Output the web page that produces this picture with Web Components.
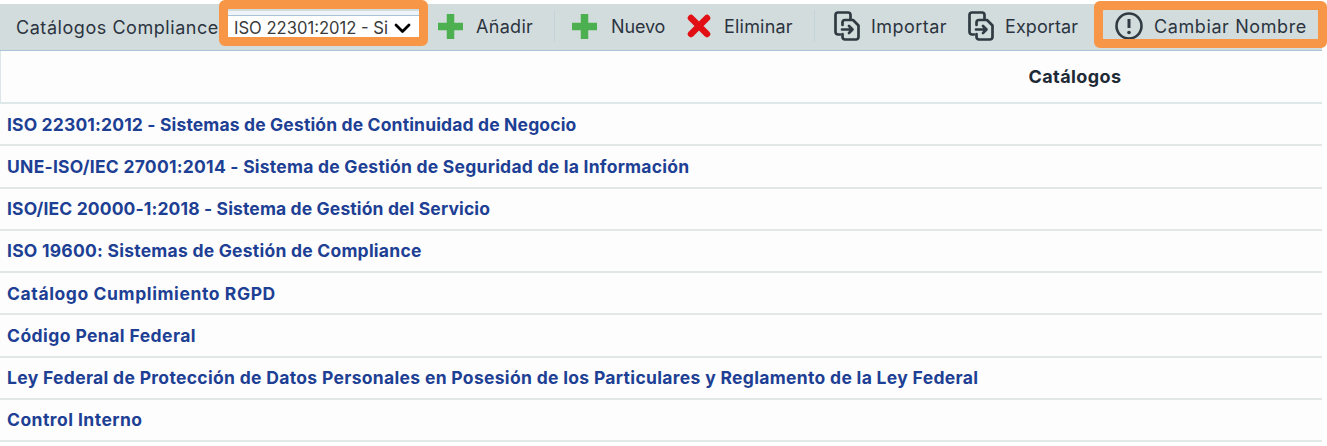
<!DOCTYPE html>
<html lang="es"><head><meta charset="utf-8"><title>Catálogos</title>
<style>
html,body{margin:0;padding:0;background:#fff;overflow:hidden}
body{width:1327px;height:446px;font-family:Inter,"Open Sans",sans-serif}
</style></head><body>
<cat-app>
<cat-toolbar>
  <span slot="label">Catálogos Compliance</span>
  <cat-select slot="select" value="ISO 22301:2012 - Si"></cat-select>
  <cat-btn slot="a" icon="plus" gap="13" w="116" style="--ls:.3px">Añadir</cat-btn>
  <cat-btn slot="b" icon="plus" gap="14" w="115" style="--ls:-.15px">Nuevo</cat-btn>
  <cat-btn slot="b" icon="x" gap="13" w="127" style="--ls:.2px">Eliminar</cat-btn>
  <cat-btn slot="c" icon="copy" gap="11" w="134" style="--ls:.45px">Importar</cat-btn>
  <cat-btn slot="c" icon="copy" gap="11" w="130" style="--ls:.08px">Exportar</cat-btn>
  <cat-btn slot="d" icon="info" gap="11" w="207" style="--ls:.6px">Cambiar Nombre</cat-btn>
</cat-toolbar>
<cat-table heading="Catálogos">
  <cat-row style="--ls:.15px">ISO 22301:2012 - Sistemas de Gestión de Continuidad de Negocio</cat-row>
  <cat-row style="--ls:.24px">UNE-ISO/IEC 27001:2014 - Sistema de Gestión de Seguridad de la Información</cat-row>
  <cat-row style="--ls:.13px">ISO/IEC 20000-1:2018 - Sistema de Gestión del Servicio</cat-row>
  <cat-row style="--ls:.24px">ISO 19600: Sistemas de Gestión de Compliance</cat-row>
  <cat-row style="--ls:.6px">Catálogo Cumplimiento RGPD</cat-row>
  <cat-row style="--ls:.43px">Código Penal Federal</cat-row>
  <cat-row style="--ls:.32px">Ley Federal de Protección de Datos Personales en Posesión de los Particulares y Reglamento de la Ley Federal</cat-row>
  <cat-row style="--ls:.46px">Control Interno</cat-row>
</cat-table>
</cat-app>
<script>
const ICONS={
plus:'<svg width="25" height="25" viewBox="0 0 25 25"><path d="M8.750 0h7.500v8.750H25v7.500h-8.750V25h-7.500v-8.750H0v-7.500h8.750z" fill="#4caf50"/></svg>',
x:'<svg width="24" height="24" viewBox="0 0 24 24"><path d="M4 4 20 20M20 4 4 20" stroke="#e10f14" stroke-width="6.500" stroke-linecap="round"/></svg>',
copy:'<svg width="26" height="30" viewBox="0 0 26 30" fill="none" stroke="#2f3a42" stroke-width="2.700" stroke-linejoin="round" stroke-linecap="round"><path d="M6 23.500H4A2.500 2.500 0 0 1 1.500 21V4A2.500 2.500 0 0 1 4 1.500h10A2.500 2.500 0 0 1 16.500 4v4.500"/><path d="M8.500 14v-2.500A2.500 2.500 0 0 1 11 9h8l5.500 5.500V26A2.500 2.500 0 0 1 22 28.500H11A2.500 2.500 0 0 1 8.500 26v-3"/><path d="M8 18.500h10.500M15 15l3.500 3.500L15 22"/></svg>',
info:'<svg width="28" height="28" viewBox="0 0 28 28" fill="none" stroke="#2f3a42"><circle cx="14" cy="14" r="12.500" stroke-width="2.600"/><path d="M14 7v9" stroke-width="3"/><circle cx="14" cy="20.500" r="1.800" fill="#2f3a42" stroke="none"/></svg>'};
function def(name,html){customElements.define(name,class extends HTMLElement{constructor(){super();this.attachShadow({mode:'open'}).innerHTML=typeof html==='function'?html(this):html}})}
def('cat-app','<style>:host{display:block;padding-top:4px}</style><slot></slot>');
def('cat-toolbar',`<style>
:host{display:flex;align-items:center;height:46px;background:#d3dcdd;border-bottom:1px solid #a9c4d8;width:1322px;color:#2b3440;position:relative}
.l{padding-left:16px;width:219px;box-sizing:border-box;font-size:18px;letter-spacing:.55px;white-space:nowrap;flex:none}
.g{display:flex;align-items:center;height:32px;border-right:1px solid #c4d3dc;flex:none;margin-top:-2px}
.s{flex:none;width:219px;display:flex}
.d{flex:none;margin-left:auto;margin-top:-2px}
.hl{position:absolute;border:9px solid #f79646;border-radius:6px;box-sizing:border-box;pointer-events:none}
.h1{left:219px;top:-4px;width:209px;height:46px}
.h2{left:1094px;top:-3px;width:233px;height:47px}
</style><div class="l"><slot name="label"></slot></div><div class="s"><slot name="select"></slot></div><div class="g"><slot name="a"></slot></div><div class="g" style="padding-left:17px"><slot name="b"></slot></div><div class="g" style="border:0;padding-left:19px"><slot name="c"></slot></div><div class="d"><slot name="d"></slot></div><div class="hl h1"></div><div class="hl h2"></div>`);
def('cat-select',e=>`<style>:host{display:flex;align-items:center;justify-content:space-between;width:191px;height:28px;margin-top:-5px;margin-left:9px;background:linear-gradient(#eef3f7 0 4px,#a9c4d8 4px 5px,#fff 5px);box-sizing:border-box;padding:7px 8px 0 6px;font-size:16.600px;color:#3a3a3a;white-space:nowrap}</style><span>${e.getAttribute('value')}</span><svg width="17" height="11" viewBox="0 0 17 11" fill="none" stroke="#000" stroke-width="2.800" stroke-linecap="round" stroke-linejoin="round"><path d="M2 2l6.500 6.500L15 2"/></svg>`);
def('cat-btn',e=>`<style>:host{display:flex;align-items:center;box-sizing:border-box;width:${e.getAttribute('w')}px;gap:${e.getAttribute('gap')}px;font-size:18px;letter-spacing:var(--ls,.45px);white-space:nowrap;color:#2b3440;flex:none}svg{flex:none;display:block}</style>${ICONS[e.getAttribute('icon')]}<span><slot></slot></span>`);
def('cat-table',e=>`<style>:host{display:block;width:1322px;background:#fdfdfd}.h{height:53px;display:flex;align-items:center;justify-content:center;font-weight:700;font-size:18px;letter-spacing:.4px;color:#1e2a36;padding-left:827px;box-sizing:border-box;border-left:1px solid #dbe6e9;border-bottom:2px solid #dfe8e8}</style><div class="h">${e.getAttribute('heading')}</div><slot></slot>`);
def('cat-row','<style>:host{display:flex;align-items:center;height:42.250px;box-sizing:border-box;padding-left:7px;border-bottom:2px solid #e2e8e6;font-weight:700;font-size:17.500px;letter-spacing:var(--ls,.33px);color:#1d3f94;white-space:nowrap}</style><slot></slot>');
</script>
</body></html>
